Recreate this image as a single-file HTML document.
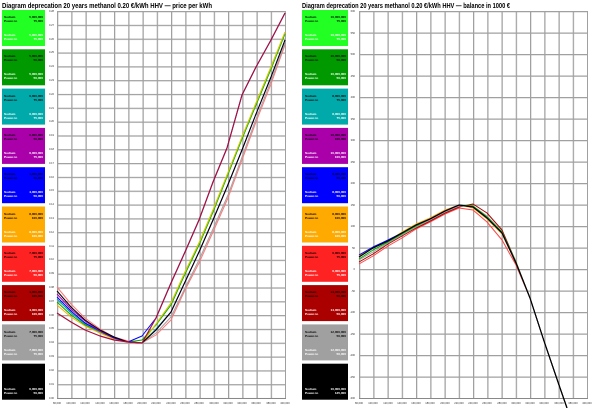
<!DOCTYPE html>
<html><head><meta charset="utf-8"><style>
html,body{margin:0;padding:0;background:#fff;width:600px;height:408px;overflow:hidden}
svg{display:block}
text{font-family:"Liberation Sans",sans-serif}
.t{font-size:7px;font-weight:bold;fill:#000}
.lg{font-size:3.1px;font-weight:bold}
.ax{font-size:2.6px;fill:#333}
</style></head><body>
<svg width="600" height="408" viewBox="0 0 600 408" xmlns="http://www.w3.org/2000/svg">
<defs>
<pattern id="gL" x="57" y="11" width="14.25" height="13.82" patternUnits="userSpaceOnUse">
<path d="M0.6 0V13.82M0 0.6H14.25" stroke="#a0a0a0" stroke-width="1.3" fill="none"/></pattern>
<pattern id="gR" x="359" y="11" width="14.25" height="21.5" patternUnits="userSpaceOnUse">
<path d="M0.6 0V21.5M0 0.6H14.25" stroke="#a0a0a0" stroke-width="1.3" fill="none"/></pattern>
</defs>
<text class="t" x="2" y="8" textLength="210" lengthAdjust="spacingAndGlyphs">Diagram deprecation 20 years methanol 0.20 €/kWh HHV — price per kWh</text>
<text class="t" x="302" y="8" textLength="208" lengthAdjust="spacingAndGlyphs">Diagram deprecation 20 years methanol 0.20 €/kWh HHV — balance in 1000 €</text>

<rect x="57" y="11" width="229" height="388" fill="url(#gL)"/>
<line x1="57" y1="398.5" x2="286" y2="398.5" stroke="#888" stroke-width="1"/>
<rect x="359" y="11" width="229" height="388" fill="url(#gR)"/>
<line x1="359" y1="398.5" x2="588" y2="398.5" stroke="#888" stroke-width="1"/>

<g class="ax" text-anchor="end">
<text x="54" y="12">0.28</text><text x="54" y="26">0.27</text><text x="54" y="40">0.26</text><text x="54" y="53">0.25</text><text x="54" y="67">0.24</text><text x="54" y="81">0.23</text><text x="54" y="95">0.22</text><text x="54" y="109">0.21</text><text x="54" y="122">0.20</text><text x="54" y="136">0.19</text><text x="54" y="150">0.18</text><text x="54" y="164">0.17</text><text x="54" y="178">0.16</text><text x="54" y="191">0.15</text><text x="54" y="205">0.14</text><text x="54" y="219">0.13</text><text x="54" y="233">0.12</text><text x="54" y="247">0.11</text><text x="54" y="260">0.10</text><text x="54" y="274">0.09</text><text x="54" y="288">0.08</text><text x="54" y="302">0.07</text><text x="54" y="316">0.06</text><text x="54" y="329">0.05</text><text x="54" y="343">0.04</text><text x="54" y="357">0.03</text><text x="54" y="371">0.02</text><text x="54" y="385">0.01</text><text x="54" y="399">0.00</text>
</g>
<g class="ax" text-anchor="end">
<text x="355" y="12">600</text><text x="355" y="34">550</text><text x="355" y="55">500</text><text x="355" y="77">450</text><text x="355" y="98">400</text><text x="355" y="120">350</text><text x="355" y="141">300</text><text x="355" y="163">250</text><text x="355" y="184">200</text><text x="355" y="206">150</text><text x="355" y="227">100</text><text x="355" y="249">50</text><text x="355" y="270">0</text><text x="355" y="292">-50</text><text x="355" y="313">-100</text><text x="355" y="335">-150</text><text x="355" y="356">-200</text><text x="355" y="378">-250</text><text x="355" y="399">-300</text>
</g>
<g class="ax" text-anchor="middle">
<text x="57" y="404">80,000</text><text x="71" y="404">100,000</text><text x="85" y="404">120,000</text><text x="100" y="404">140,000</text><text x="114" y="404">160,000</text><text x="128" y="404">180,000</text><text x="142" y="404">200,000</text><text x="156" y="404">220,000</text><text x="171" y="404">240,000</text><text x="185" y="404">260,000</text><text x="199" y="404">280,000</text><text x="214" y="404">300,000</text><text x="228" y="404">320,000</text><text x="242" y="404">340,000</text><text x="256" y="404">360,000</text><text x="271" y="404">380,000</text><text x="285" y="404">400,000</text>
<text x="359" y="404">80,000</text><text x="373" y="404">100,000</text><text x="388" y="404">120,000</text><text x="402" y="404">140,000</text><text x="416" y="404">160,000</text><text x="430" y="404">180,000</text><text x="445" y="404">200,000</text><text x="459" y="404">220,000</text><text x="473" y="404">240,000</text><text x="487" y="404">260,000</text><text x="502" y="404">280,000</text><text x="516" y="404">300,000</text><text x="530" y="404">320,000</text><text x="544" y="404">340,000</text><text x="559" y="404">360,000</text><text x="573" y="404">380,000</text><text x="587" y="404">400,000</text>
</g>

<g fill="none" stroke-width="1" stroke-linejoin="round">
<polyline stroke="#ff7777" points="57,287 71,304 85,318 100,329 114,337 128,341 142,343 156,335 171,320 185,290 199,263 213,232 228,198 242,160 256,122 271,84 285,45"/>
<polyline stroke="#a0a0a0" points="57,300 71,312 85,323 100,332 114,338 128,342 142,343 156,333 171,317 185,288 199,260 213,229 228,195 242,157 256,119 271,81 285,43"/>
<polyline stroke="#00aaaa" points="57,299 71,313 85,324 100,332 114,338 128,342 142,343 156,329 171,312 185,282 199,252 213,220 227,187 242,150 256,114 271,77 285,40"/>
<polyline stroke="#00aa00" points="57,302 71,315 85,325 100,333 114,338 128,342 142,340 156,325 171,305 185,274 199,245 213,212 227,177 242,139 256,105 271,69 285,34"/>
<polyline stroke="#ffaa00" points="57,305 71,317 85,326 100,333 114,339 128,342 142,343 156,324 171,303 185,272 199,243 213,210 227,175 242,137 256,103 271,67 285,32"/>
<polyline stroke="#cccc00" points="142,343 156,324 171,303 185,272 199,243 213,210 227,175 242,137 256,103 271,67 285,32"/>
<polyline stroke="#0000ff" points="57,297 71,311 85,323 100,331 114,338 128,342 142,336 156,318 171,283 185,252 199,220 213,182 227,148 242,95 256,67 271,40 285,13"/>
<polyline stroke="#aa00aa" points="57,294 71,309 85,321 100,331 114,337 128,342 142,343 156,330 171,312 185,282 199,252 213,220 227,187 242,150 256,114 271,77 285,40"/>
<polyline stroke="#000" points="57,291 71,307 85,320 100,330 114,337 128,342 142,343 156,330 171,312 185,282 199,252 213,220 227,187 242,150 256,114 271,77 285,40"/>
<polyline stroke="#a8103a" stroke-width="1.2" points="57,313 71,322 85,330 100,336 114,340 128,342 142,343 156,318 171,283 185,252 199,220 213,182 227,148 242,95 256,67 271,40 285,13"/>
</g>
<g fill="none" stroke-width="1" stroke-linejoin="round">
<polyline stroke="#ff4444" points="359,264 373,256 388,246 402,238 416,229 430,222 445,214 459,208 473,210 487,222 502,240 516,265 530,298 544,341 559,385 567,408"/>
<polyline stroke="#aa0000" points="359,262 373,254 388,244 402,236 416,228 430,221 445,213 459,207 473,204 487,213 502,230 516,262 530,298 544,341 559,385 567,408"/>
<polyline stroke="#a0a0a0" points="359,260 373,252 388,243 402,235 416,227 430,220 445,212 459,206 473,206 487,216 502,232 516,263 530,298 544,341 559,385 567,408"/>
<polyline stroke="#00aa00" points="359,259 373,250 388,242 402,234 416,226 430,219 445,211 459,205 473,206 487,217 502,232 516,262 530,298 544,341 559,385 567,408"/>
<polyline stroke="#ffaa00" points="359,256 373,247 388,241 402,232 416,224 430,218 445,210 459,205 473,208 487,219 502,234 516,263 530,298 544,341 559,385 567,408"/>
<polyline stroke="#0000ff" points="359,255 373,247 388,240 402,233 416,225 430,219 445,211 459,205 473,207 487,218 502,233 516,263 530,298 544,341 559,385 567,408"/>
<polyline stroke="#000" stroke-width="1.2" points="359,257 373,248 388,241 402,233 416,225 430,219 445,211 459,205 473,207 487,218 502,233 516,263 530,298 544,341 559,385 567,408"/>
</g>

<g>
<rect x="2" y="10" width="43" height="36" fill="#22ff22"/>
<rect x="2" y="49.3" width="43" height="36" fill="#009900"/>
<rect x="2" y="88.6" width="43" height="36" fill="#00aaaa"/>
<rect x="2" y="127.9" width="43" height="36" fill="#aa00aa"/>
<rect x="2" y="167.2" width="43" height="36" fill="#0000ff"/>
<rect x="2" y="206.5" width="43" height="36" fill="#ffaa00"/>
<rect x="2" y="245.8" width="43" height="36" fill="#ff2222"/>
<rect x="2" y="285.1" width="43" height="36" fill="#aa0000"/>
<rect x="2" y="324.4" width="43" height="36" fill="#a0a0a0"/>
<rect x="2" y="363.7" width="43" height="36" fill="#000"/>
<rect x="302" y="10" width="46" height="36" fill="#22ff22"/>
<rect x="302" y="49.3" width="46" height="36" fill="#009900"/>
<rect x="302" y="88.6" width="46" height="36" fill="#00aaaa"/>
<rect x="302" y="127.9" width="46" height="36" fill="#aa00aa"/>
<rect x="302" y="167.2" width="46" height="36" fill="#0000ff"/>
<rect x="302" y="206.5" width="46" height="36" fill="#ffaa00"/>
<rect x="302" y="245.8" width="46" height="36" fill="#ff2222"/>
<rect x="302" y="285.1" width="46" height="36" fill="#aa0000"/>
<rect x="302" y="324.4" width="46" height="36" fill="#a0a0a0"/>
<rect x="302" y="363.7" width="46" height="36" fill="#000"/>
</g>
<g class="lg">
<g fill="#000"><text x="4" y="18">Sodium</text><text x="4" y="22">Power-to</text><text x="43" y="18" text-anchor="end">5,000,000</text><text x="43" y="22" text-anchor="end">75,000</text></g>
<g fill="#fff"><text x="4" y="36">Sodium</text><text x="4" y="40">Power-to</text><text x="43" y="36" text-anchor="end">5,000,000</text><text x="43" y="40" text-anchor="end">75,000</text></g>
<g fill="#000"><text x="4" y="57">Sodium</text><text x="4" y="61">Power-to</text><text x="43" y="57" text-anchor="end">5,000,000</text><text x="43" y="61" text-anchor="end">50,000</text></g>
<g fill="#fff"><text x="4" y="75">Sodium</text><text x="4" y="79">Power-to</text><text x="43" y="75" text-anchor="end">5,000,000</text><text x="43" y="79" text-anchor="end">50,000</text></g>
<g fill="#000"><text x="4" y="97">Sodium</text><text x="4" y="101">Power-to</text><text x="43" y="97" text-anchor="end">6,000,000</text><text x="43" y="101" text-anchor="end">75,000</text></g>
<g fill="#fff"><text x="4" y="115">Sodium</text><text x="4" y="119">Power-to</text><text x="43" y="115" text-anchor="end">6,000,000</text><text x="43" y="119" text-anchor="end">75,000</text></g>
<g fill="#000"><text x="4" y="136">Sodium</text><text x="4" y="140">Power-to</text><text x="43" y="136" text-anchor="end">6,000,000</text><text x="43" y="140" text-anchor="end">50,000</text></g>
<g fill="#fff"><text x="4" y="154">Sodium</text><text x="4" y="158">Power-to</text><text x="43" y="154" text-anchor="end">6,000,000</text><text x="43" y="158" text-anchor="end">75,000</text></g>
<g fill="#000"><text x="4" y="175">Sodium</text><text x="4" y="179">Power-to</text><text x="43" y="175" text-anchor="end">4,000,000</text><text x="43" y="179" text-anchor="end">50,000</text></g>
<g fill="#fff"><text x="4" y="193">Sodium</text><text x="4" y="197">Power-to</text><text x="43" y="193" text-anchor="end">4,000,000</text><text x="43" y="197" text-anchor="end">50,000</text></g>
<g fill="#000"><text x="4" y="215">Sodium</text><text x="4" y="219">Power-to</text><text x="43" y="215" text-anchor="end">8,000,000</text><text x="43" y="219" text-anchor="end">100,000</text></g>
<g fill="#fff"><text x="4" y="233">Sodium</text><text x="4" y="237">Power-to</text><text x="43" y="233" text-anchor="end">8,000,000</text><text x="43" y="237" text-anchor="end">100,000</text></g>
<g fill="#000"><text x="4" y="254">Sodium</text><text x="4" y="258">Power-to</text><text x="43" y="254" text-anchor="end">7,000,000</text><text x="43" y="258" text-anchor="end">75,000</text></g>
<g fill="#fff"><text x="4" y="272">Sodium</text><text x="4" y="276">Power-to</text><text x="43" y="272" text-anchor="end">7,000,000</text><text x="43" y="276" text-anchor="end">50,000</text></g>
<g fill="#000"><text x="4" y="293">Sodium</text><text x="4" y="297">Power-to</text><text x="43" y="293" text-anchor="end">4,000,000</text><text x="43" y="297" text-anchor="end">100,000</text></g>
<g fill="#fff"><text x="4" y="311">Sodium</text><text x="4" y="315">Power-to</text><text x="43" y="311" text-anchor="end">4,000,000</text><text x="43" y="315" text-anchor="end">100,000</text></g>
<g fill="#000"><text x="4" y="333">Sodium</text><text x="4" y="337">Power-to</text><text x="43" y="333" text-anchor="end">7,000,000</text><text x="43" y="337" text-anchor="end">75,000</text></g>
<g fill="#fff"><text x="4" y="351">Sodium</text><text x="4" y="355">Power-to</text><text x="43" y="351" text-anchor="end">7,000,000</text><text x="43" y="355" text-anchor="end">75,000</text></g>
<g fill="#fff"><text x="4" y="390">Sodium</text><text x="4" y="394">Power-to</text><text x="43" y="390" text-anchor="end">6,000,000</text><text x="43" y="394" text-anchor="end">50,000</text></g>
<g fill="#000"><text x="305" y="18">Sodium</text><text x="305" y="22">Power-to</text><text x="346" y="18" text-anchor="end">10,000,000</text><text x="346" y="22" text-anchor="end">75,000</text></g>
<g fill="#fff"><text x="305" y="36">Sodium</text><text x="305" y="40">Power-to</text><text x="346" y="36" text-anchor="end">10,000,000</text><text x="346" y="40" text-anchor="end">75,000</text></g>
<g fill="#000"><text x="305" y="57">Sodium</text><text x="305" y="61">Power-to</text><text x="346" y="57" text-anchor="end">10,000,000</text><text x="346" y="61" text-anchor="end">50,000</text></g>
<g fill="#fff"><text x="305" y="75">Sodium</text><text x="305" y="79">Power-to</text><text x="346" y="75" text-anchor="end">10,000,000</text><text x="346" y="79" text-anchor="end">50,000</text></g>
<g fill="#000"><text x="305" y="97">Sodium</text><text x="305" y="101">Power-to</text><text x="346" y="97" text-anchor="end">8,000,000</text><text x="346" y="101" text-anchor="end">75,000</text></g>
<g fill="#fff"><text x="305" y="115">Sodium</text><text x="305" y="119">Power-to</text><text x="346" y="115" text-anchor="end">8,000,000</text><text x="346" y="119" text-anchor="end">75,000</text></g>
<g fill="#000"><text x="305" y="136">Sodium</text><text x="305" y="140">Power-to</text><text x="346" y="136" text-anchor="end">10,000,000</text><text x="346" y="140" text-anchor="end">100,000</text></g>
<g fill="#fff"><text x="305" y="154">Sodium</text><text x="305" y="158">Power-to</text><text x="346" y="154" text-anchor="end">10,000,000</text><text x="346" y="158" text-anchor="end">100,000</text></g>
<g fill="#000"><text x="305" y="175">Sodium</text><text x="305" y="179">Power-to</text><text x="346" y="175" text-anchor="end">8,000,000</text><text x="346" y="179" text-anchor="end">50,000</text></g>
<g fill="#fff"><text x="305" y="193">Sodium</text><text x="305" y="197">Power-to</text><text x="346" y="193" text-anchor="end">8,000,000</text><text x="346" y="197" text-anchor="end">50,000</text></g>
<g fill="#000"><text x="305" y="215">Sodium</text><text x="305" y="219">Power-to</text><text x="346" y="215" text-anchor="end">8,000,000</text><text x="346" y="219" text-anchor="end">100,000</text></g>
<g fill="#fff"><text x="305" y="233">Sodium</text><text x="305" y="237">Power-to</text><text x="346" y="233" text-anchor="end">8,000,000</text><text x="346" y="237" text-anchor="end">100,000</text></g>
<g fill="#000"><text x="305" y="254">Sodium</text><text x="305" y="258">Power-to</text><text x="346" y="254" text-anchor="end">6,000,000</text><text x="346" y="258" text-anchor="end">75,000</text></g>
<g fill="#fff"><text x="305" y="272">Sodium</text><text x="305" y="276">Power-to</text><text x="346" y="272" text-anchor="end">6,000,000</text><text x="346" y="276" text-anchor="end">75,000</text></g>
<g fill="#000"><text x="305" y="293">Sodium</text><text x="305" y="297">Power-to</text><text x="346" y="293" text-anchor="end">14,000,000</text><text x="346" y="297" text-anchor="end">50,000</text></g>
<g fill="#fff"><text x="305" y="311">Sodium</text><text x="305" y="315">Power-to</text><text x="346" y="311" text-anchor="end">14,000,000</text><text x="346" y="315" text-anchor="end">50,000</text></g>
<g fill="#000"><text x="305" y="333">Sodium</text><text x="305" y="337">Power-to</text><text x="346" y="333" text-anchor="end">12,000,000</text><text x="346" y="337" text-anchor="end">50,000</text></g>
<g fill="#fff"><text x="305" y="351">Sodium</text><text x="305" y="355">Power-to</text><text x="346" y="351" text-anchor="end">12,000,000</text><text x="346" y="355" text-anchor="end">50,000</text></g>
<g fill="#fff"><text x="305" y="390">Sodium</text><text x="305" y="394">Power-to</text><text x="346" y="390" text-anchor="end">10,000,000</text><text x="346" y="394" text-anchor="end">125,000</text></g>
</g>
</svg>
</body></html>
